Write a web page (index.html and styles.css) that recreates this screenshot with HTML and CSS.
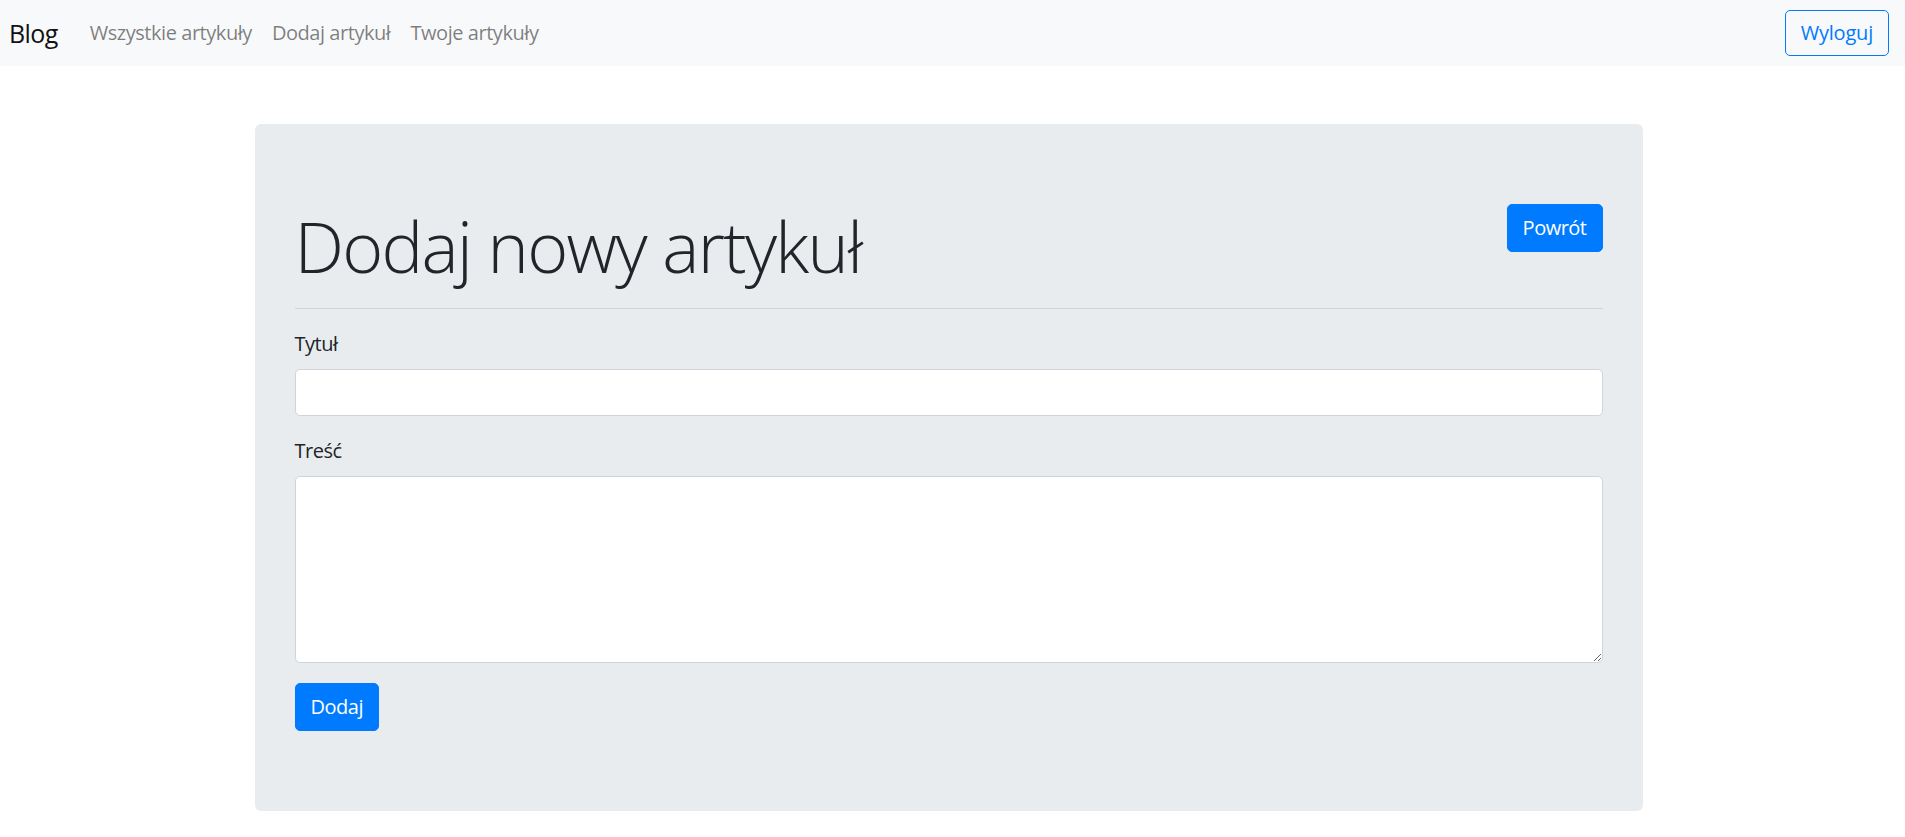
FILE: index.html
```html
<!DOCTYPE html>
<html lang="pl">
<head>
<meta charset="utf-8">
<title>Blog - Dodaj artykuł</title>
<link rel="stylesheet" href="styles.css">
</head>
<body>
<nav class="navbar">
  <a class="brand" href="#">Blog</a>
  <ul class="nav-links">
    <li><a href="#">Wszystkie artykuły</a></li>
    <li><a href="#">Dodaj artykuł</a></li>
    <li><a href="#">Twoje artykuły</a></li>
  </ul>
  <button class="btn btn-outline" type="button">Wyloguj</button>
</nav>
<main class="page">
  <section class="jumbotron">
    <div class="jumbo-head">
      <h1 class="display">Dodaj nowy artykuł</h1>
      <a class="btn btn-primary" href="#">Powrót</a>
    </div>
    <hr class="divider">
    <form class="form">
      <div class="form-group">
        <label for="title">Tytuł</label>
        <input id="title" class="form-control" type="text">
      </div>
      <div class="form-group">
        <label for="content">Treść</label>
        <textarea id="content" class="form-control textarea"></textarea>
      </div>
      <button class="btn btn-primary" type="submit">Dodaj</button>
    </form>
  </section>
</main>
</body>
</html>
```
FILE: styles.css
```css
* { box-sizing: border-box; }
html, body { margin: 0; padding: 0; }
body {
  font-family: "Open Sans", "Noto Sans", sans-serif;
  font-size: 20px;
  line-height: 1.5;
  color: #212529;
  background: #fff;
}
a { text-decoration: none; }

.navbar {
  display: flex;
  align-items: center;
  height: 66px;
  padding: 0 16px 0 9px;
  background: #f8f9fa;
}
.brand {
  font-size: 25px;
  line-height: 37px;
  color: #111;
  margin-right: 22px;
  letter-spacing: -0.6px;
}
.nav-links {
  display: flex;
  list-style: none;
  margin: 0;
  padding: 0;
  flex: 1;
}
.nav-links a {
  display: block;
  padding: 8px 10px;
  color: rgba(0, 0, 0, 0.5);
  letter-spacing: -0.45px;
}

.btn {
  display: inline-block;
  font-family: inherit;
  font-size: 20px;
  line-height: 30px;
  padding: 8px 15px;
  border: 1px solid transparent;
  border-radius: 5px;
  cursor: pointer;
  letter-spacing: -0.5px;
}
.btn-outline {
  color: #007bff;
  background: transparent;
  border-color: #007bff;
  padding: 7px 15px;
  letter-spacing: -0.2px;
}
.btn-primary {
  color: #fff;
  background: #007bff;
  border-color: #007bff;
}

.page {
  width: 1388px;
  margin: 58px 0 0 calc(50% - 698px);
}
.jumbotron {
  background: #e9ecef;
  border-radius: 6px;
  padding: 80px 40px;
}
.jumbo-head {
  display: flex;
  justify-content: space-between;
  align-items: flex-start;
}
.display {
  margin: 0;
  font-size: 70px;
  font-weight: 300;
  line-height: 84px;
  letter-spacing: -1.7px;
  color: #212529;
}
.divider {
  margin: 20px 0 20px;
  border: 0;
  border-top: 1px solid rgba(0, 0, 0, 0.1);
}
.form-group {
  margin-bottom: 20px;
}
.form-group label {
  display: block;
  margin-bottom: 10px;
  letter-spacing: -0.5px;
}
.form-control {
  display: block;
  width: 100%;
  height: 47px;
  padding: 7px 15px;
  font-family: inherit;
  font-size: 20px;
  color: #495057;
  background: #fff;
  border: 1px solid #ced4da;
  border-radius: 5px;
}
.textarea {
  height: 187px;
  resize: vertical;
}
```
